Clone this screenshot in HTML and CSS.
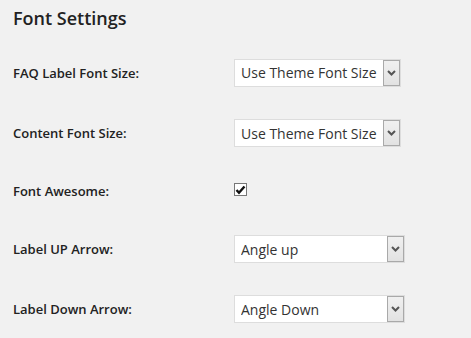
FILE: index.html
```html
<!DOCTYPE html>
<html lang="en">
<head>
  <meta charset="UTF-8">
  <meta name="viewport" content="width=device-width, initial-scale=1.0">
  <title>Font Settings</title>
  <link rel="stylesheet" href="styles.css">
</head>
<body>
  <div class="wrap">
    <h3 class="section-title">Font Settings</h3>

    <table class="form-table">
      <tr class="row-first">
        <th>FAQ Label Font Size:</th>
        <td>
          <div class="select">
            <select>
              <option>Use Theme Font Size</option>
            </select>
            <span class="select-arrow"><svg width="9" height="6" viewBox="0 0 9 6"><path d="M1 1 L4.5 4.5 L8 1" fill="none" stroke="#555" stroke-width="2"/></svg></span>
          </div>
        </td>
      </tr>
      <tr>
        <th>Content Font Size:</th>
        <td>
          <div class="select">
            <select>
              <option>Use Theme Font Size</option>
            </select>
            <span class="select-arrow"><svg width="9" height="6" viewBox="0 0 9 6"><path d="M1 1 L4.5 4.5 L8 1" fill="none" stroke="#555" stroke-width="2"/></svg></span>
          </div>
        </td>
      </tr>
      <tr class="row-check">
        <th>Font Awesome:</th>
        <td>
          <span class="checkbox">
            <svg width="11" height="10" viewBox="0 0 11 10"><path d="M1.5 5 L4 7.8 L9.5 1.5" fill="none" stroke="#111" stroke-width="2.4"/></svg>
          </span>
        </td>
      </tr>
      <tr>
        <th>Label UP Arrow:</th>
        <td>
          <div class="select select-wide">
            <select>
              <option>Angle up</option>
            </select>
            <span class="select-arrow"><svg width="9" height="6" viewBox="0 0 9 6"><path d="M1 1 L4.5 4.5 L8 1" fill="none" stroke="#555" stroke-width="2"/></svg></span>
          </div>
        </td>
      </tr>
      <tr>
        <th>Label Down Arrow:</th>
        <td>
          <div class="select select-wide">
            <select>
              <option>Angle Down</option>
            </select>
            <span class="select-arrow"><svg width="9" height="6" viewBox="0 0 9 6"><path d="M1 1 L4.5 4.5 L8 1" fill="none" stroke="#555" stroke-width="2"/></svg></span>
          </div>
        </td>
      </tr>
    </table>
  </div>
</body>
</html>
```

FILE: styles.css
```css
body {
  margin: 0;
  background: #f1f1f1;
  color: #222;
  font-family: "Open Sans", sans-serif;
  font-size: 13px;
}

.wrap {
  padding: 0 13px;
}

.section-title {
  margin: 0;
  padding-top: 6px;
  font-size: 18px;
  font-weight: 600;
  line-height: 24px;
}

.form-table {
  border-collapse: collapse;
  margin-top: 12px;
}

.form-table th {
  width: 221px;
  padding: 0;
  height: 60px;
  text-align: left;
  font-weight: 600;
  font-size: 13px;
  vertical-align: middle;
}

.form-table td {
  padding: 0;
  vertical-align: middle;
}

.row-first th {
  height: 61px;
}

.row-check th {
  height: 56px;
}

.select {
  position: relative;
  width: 167px;
  height: 28px;
}

.select-wide {
  width: 171px;
}

.select select {
  appearance: none;
  box-sizing: border-box;
  width: 100%;
  height: 100%;
  margin: 0;
  padding: 0 20px 0 6px;
  border: 1px solid #ddd;
  background: #fff;
  color: #333;
  font-family: "Open Sans", sans-serif;
  font-size: 14px;
  outline: none;
}

.select-arrow {
  position: absolute;
  top: 1px;
  right: 1px;
  bottom: 1px;
  width: 15px;
  display: flex;
  align-items: center;
  justify-content: center;
  border: 1px solid #a9a9a9;
  background: linear-gradient(#f0f0f0, #e2e2e2);
  pointer-events: none;
}

.checkbox {
  box-sizing: border-box;
  display: flex;
  align-items: center;
  justify-content: center;
  width: 13px;
  height: 13px;
  margin-top: -3px;
  border: 1px solid #777;
  background: #fff;
}
```
